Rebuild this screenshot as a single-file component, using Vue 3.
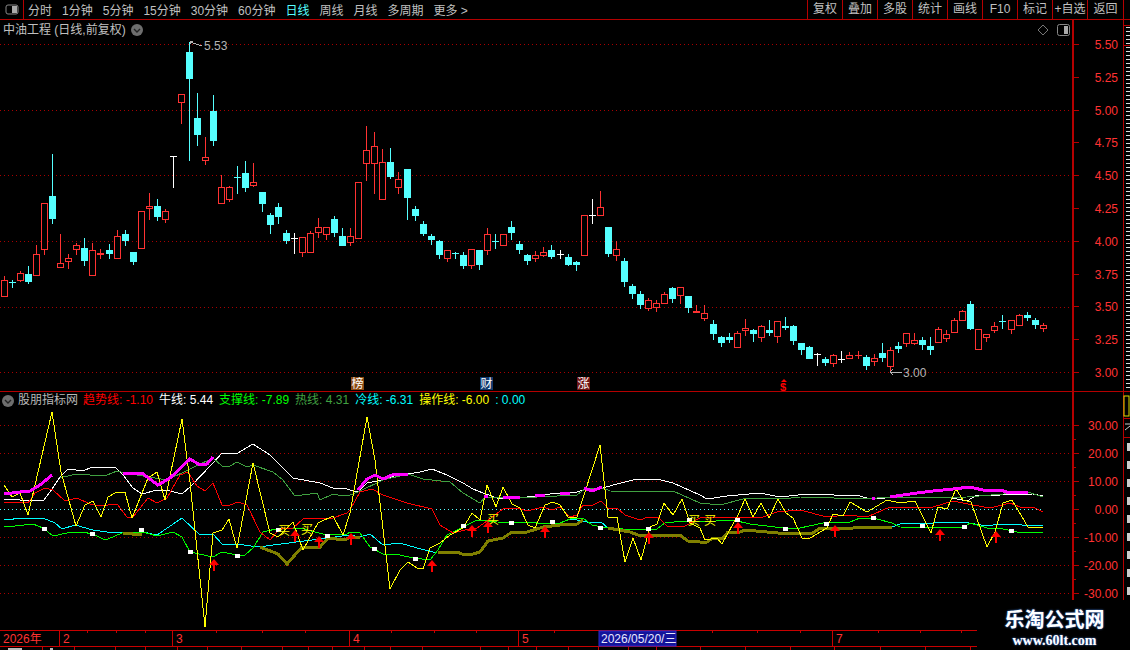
<template>
  <div class="terminal">
    <header class="toolbar">
      <button class="layout-btn">
        <svg width="14" height="11" viewBox="0 0 14 11">
          <rect x="1" y="1" width="12" height="9" rx="2" fill="none" stroke="#888" />
          <rect x="7" y="2" width="5" height="7" fill="#aaa" />
        </svg>
      </button>
      <nav class="periods">
        <span v-for="p in periods" :key="p" :class="{ active: p === '日线' }">{{ p }}</span>
      </nav>
      <div class="actions">
        <span v-for="a in actions" :key="a">{{ a }}</span>
      </div>
    </header>

    <section class="pane kline">
      <div class="plot">
        <div class="title">
          <span>中油工程 (日线,前复权)</span>
          <svg class="round-btn" width="12" height="12" viewBox="0 0 12 12">
            <circle cx="6" cy="6" r="6" fill="#6e6e6e" />
            <path d="M3 5l3 3 3-3" fill="none" stroke="#222" stroke-width="1.4" />
          </svg>
        </div>
        <div class="corner-tools">
          <svg width="12" height="12" viewBox="0 0 12 12">
            <path d="M6 1l5 5-5 5-5-5z" fill="none" stroke="#777" />
          </svg>
          <svg width="13" height="12" viewBox="0 0 13 12">
            <rect x="0.5" y="0.5" width="12" height="11" rx="2" fill="none" stroke="#888" />
            <rect x="7" y="2" width="4" height="8" fill="#aaa" />
          </svg>
        </div>
        <svg class="chart" width="1072" height="371" viewBox="0 20 1072 371">
          <line v-for="y in priceGrid" :key="y" x1="0" x2="1072" :y1="y + 0.5" :y2="y + 0.5" class="grid" />
          <g v-for="c in candles" :key="c.i" shape-rendering="crispEdges">
            <rect :x="c.x" :y="c.high" width="1" :height="c.upper" :fill="c.color" />
            <rect :x="c.x" :y="c.bottom" width="1" :height="c.lower" :fill="c.color" />
            <rect v-if="c.hollow" :x="c.x - 2.5" :y="c.top + 0.5" width="6" :height="c.body - 1" fill="#000" :stroke="c.color" />
            <rect v-else :x="c.x - 3" :y="c.top" width="7" :height="Math.max(c.body, 1)" :fill="c.color" />
          </g>
          <rect x="203" y="38" width="25" height="13" fill="#000" />
          <path d="M190 41v3M190 41h3M190 42l12 4" class="note-arrow" />
          <text x="204" y="50" class="note">5.53</text>
          <path d="M890 372h12M890 372l3-3M890 372l3 3" class="note-arrow" />
          <text x="903" y="377" class="note">3.00</text>
          <g v-for="m in markers" :key="m.text">
            <rect :x="m.x" y="377" width="13" height="13" :fill="m.bg" />
            <text :x="m.x + 0.5" y="388" class="marker">{{ m.text }}</text>
          </g>
          <path d="M784 379l3 3h-6z" fill="#f00" />
          <text x="780" y="391" class="dollar">$</text>
        </svg>
      </div>
      <svg class="axis" width="51" height="371" viewBox="0 20 51 371">
        <rect x="0" y="20" width="2" height="371" fill="#b40000" />
        <g v-for="t in priceTicks" :key="t.y">
          <rect x="2" :y="t.y" :width="t.label ? 5 : 2" height="1" fill="#b40000" />
          <text v-if="t.label" x="46" :y="t.y + 5" class="axis-text">{{ t.label }}</text>
        </g>
      </svg>
      <svg class="strip" width="7" height="371" viewBox="1123 20 7 371">
        <rect x="1123" y="20" width="1" height="371" fill="#b40000" />
        <rect x="1123" y="25" width="7" height="1" fill="#b40000" />
        <rect x="1123" y="45" width="7" height="1" fill="#b40000" />
        <rect v-for="t in stripTicks" :key="t.y" :x="t.x" :y="t.y" :width="1130 - t.x" height="1" fill="#ddd" />
      </svg>
    </section>

    <section class="pane indicator">
      <div class="plot">
        <div class="legend">
          <svg class="round-btn" width="12" height="12" viewBox="0 0 12 12">
            <circle cx="6" cy="6" r="6" fill="#6e6e6e" />
            <path d="M3 5l3 3 3-3" fill="none" stroke="#222" stroke-width="1.4" />
          </svg>
          <span class="legend-name">股朋指标网</span>
          <span v-for="l in legend" :key="l.name" :style="{ color: l.color }">{{ l.name }}: {{ l.value }}</span>
          <span class="legend-extra">: 0.00</span>
        </div>
        <svg class="chart" width="1072" height="238" viewBox="0 392 1072 238">
          <line v-for="y in indicatorGrid" :key="y" x1="0" x2="1072" :y1="y + 0.5" :y2="y + 0.5" class="grid" />
          <line x1="0" x2="1043" y1="509.5" y2="509.5" class="grid zero" />
          <g shape-rendering="crispEdges">
            <polyline v-for="(s, n) in series" :key="n" :points="s.points" :class="['line', s.cls]" />
          </g>
          <rect v-for="(d, n) in dots" :key="n" :x="d[0] - 2" :y="d[1] - 2" width="5" height="4" fill="#fff" />
          <text v-for="b in buys" :key="b[0]" :x="b[0] - 6" :y="b[1] + 5" class="buy">买</text>
          <g v-for="a in arrows" :key="a[0]" fill="#f00">
            <path :d="`M${a[0]} ${a[1]}l5 6h-10z`" />
            <rect :x="a[0] - 1" :y="a[1] + 5" width="2" height="7" />
          </g>
        </svg>
      </div>
      <svg class="axis" width="51" height="238" viewBox="0 392 51 238">
        <rect x="0" y="392" width="2" height="238" fill="#b40000" />
        <g v-for="t in indicatorTicks" :key="t.y">
          <rect x="2" :y="t.y" :width="t.label ? 5 : 2" height="1" fill="#b40000" />
          <text v-if="t.label" x="46" :y="t.y + 5" class="axis-text">{{ t.label }}</text>
        </g>
      </svg>
      <svg class="strip" width="7" height="238" viewBox="1123 392 7 238">
        <rect x="1123" y="392" width="1" height="238" fill="#b40000" />
        <rect x="1124" y="396" width="5" height="20" fill="none" stroke="#dd0" />
        <rect x="1123" y="418" width="7" height="1" fill="#b40000" />
        <path d="M1125 424h5M1125 430l5-4" stroke="#ccc" fill="none" />
        <rect x="1123" y="437" width="7" height="1" fill="#b40000" />
        <rect v-for="y in stripBlocks" :key="y" x="1127" :y="y" width="3" height="8" fill="#ccc" />
      </svg>
    </section>

    <svg class="timeline" width="1130" height="20" viewBox="0 630 1130 20">
      <rect x="0" y="630" width="978" height="1" fill="#c80000" />
      <rect x="0" y="646" width="978" height="1" fill="#c80000" />
      <g v-for="s in months" :key="s.x">
        <rect :x="s.x" y="630" width="1" height="16" fill="#c80000" />
        <text :x="s.x + 4" y="643" class="axis-text start">{{ s.label }}</text>
      </g>
      <rect v-for="x in minorTicks" :key="x" :x="x" y="631" width="1" height="2" fill="#c80000" />
      <rect x="599" y="631" width="77" height="15" fill="#14149a" stroke="#2b2bd0" />
      <text x="601" y="643" class="date-tag">2026/05/20/三</text>
      <rect v-for="x in tabEdges" :key="x" :x="x" y="647" width="1" height="3" fill="#c80000" />
      <rect x="8" y="648" width="14" height="2" fill="#bbb" />
      <rect x="50" y="648" width="3" height="2" fill="#bbb" />
    </svg>

    <aside class="watermark">
      <strong>乐淘公式网</strong>
      <em>www.60lt.com</em>
    </aside>
  </div>
</template>

<script setup>
const periods = ['分时', '1分钟', '5分钟', '15分钟', '30分钟', '60分钟', '日线', '周线', '月线', '多周期', '更多 >']
const actions = ['复权', '叠加', '多股', '统计', '画线', 'F10', '标记', '+自选', '返回']

const COLORS = { r: '#ff3232', c: '#55ffff', w: '#ffffff' }

// type, high, body top, body bottom, low (pixels)
const bars = [
  ['r',276,280,297,297],['c',280,282,282,288],['r',271,273,281,282],['c',266,274,282,284],['r',245,254,276,276],
  ['r',203,203,250,255],['c',154,196,219,224],['r',234,263,268,268],['r',254,258,262,269],['r',243,245,250,255],
  ['c',238,248,261,266],['r',243,250,276,276],['r',249,253,255,259],['c',244,250,254,259],['r',230,236,259,259],
  ['c',230,234,241,246],['c',252,252,262,265],['r',211,211,249,249],['r',193,206,209,220],['c',199,206,217,221],
  ['r',209,211,220,223],['w',156,156,156,188],['r',94,94,103,124],['c',42,52,79,161],['c',93,118,135,146],
  ['r',137,157,161,165],['c',95,111,141,146],['r',175,187,204,204],['r',186,187,200,202],['c',166,177,177,194],
  ['c',161,173,188,192],['r',163,182,186,187],['c',192,192,204,212],['c',213,215,225,234],['c',203,207,217,224],
  ['c',230,233,241,244],['w',233,238,238,254],['r',237,237,253,257],['r',231,233,253,253],['r',218,227,233,238],
  ['r',227,227,235,240],['c',216,219,233,237],['c',228,236,246,246],['r',228,236,243,246],['r',182,182,239,239],
  ['r',126,150,164,181],['r',132,146,164,194],['r',149,162,200,200],['c',148,162,177,179],['r',172,179,188,194],
  ['c',169,169,198,220],['c',206,209,216,221],['c',221,224,234,236],['c',234,236,240,245],['c',240,241,255,259],
  ['r',250,250,259,262],['c',252,253,253,259],['c',252,255,266,269],['r',249,249,266,269],['c',250,250,265,270],
  ['r',228,234,251,255],['c',234,241,241,249],['r',234,234,246,246],['c',221,227,233,240],['c',241,244,250,254],
  ['c',254,255,261,265],['r',251,255,259,262],['r',247,252,256,257],['c',245,250,257,259],['w',250,254,254,259],
  ['c',254,257,265,266],['c',261,262,265,271],['r',215,215,256,256],['w',199,215,215,224],['r',191,207,216,216],
  ['c',227,227,254,257],['r',241,249,256,261],['c',258,261,282,287],['c',284,286,294,299],['c',291,294,305,309],
  ['r',298,300,309,311],['r',300,303,308,312],['r',292,294,304,304],['c',287,288,299,303],['r',287,287,296,304],
  ['c',296,296,308,313],['r',305,311,313,313],['r',305,313,319,321],['c',320,324,334,340],['c',336,337,343,347],
  ['c',333,337,340,343],['r',331,333,348,348],['r',319,328,331,336],['c',329,330,334,342],['r',325,326,338,342],
  ['c',320,330,333,336],['r',321,321,337,343],['c',317,326,328,330],['c',325,326,341,345],['c',343,343,350,355],
  ['c',346,347,359,359],['w',353,354,354,366],['c',357,359,363,366],['r',354,355,364,367],['w',351,359,359,363],
  ['r',352,355,359,359],['r',351,355,356,359],['c',355,357,366,370],['r',354,358,362,366],['c',343,353,358,362],
  ['r',347,350,367,372],['c',342,346,349,353],['r',333,333,344,347],['r',333,340,344,345],['c',337,340,345,350],
  ['c',337,346,350,355],['r',327,329,343,343],['r',330,334,339,342],['r',318,320,333,333],['r',310,311,321,321],
  ['c',301,304,329,330],['r',329,329,350,350],['r',334,334,338,342],['r',322,326,331,333],['c',315,321,321,329],
  ['r',320,320,330,334],['r',314,315,326,326],['c',312,315,318,321],['c',318,320,325,329],['r',323,325,329,332],
]

const candles = bars.map(([type, high, top, bottom, low], i) => ({
  i,
  x: Math.floor(4.3 + 8.054 * i),
  color: COLORS[type],
  hollow: type === 'r' && bottom - top > 1,
  high,
  top,
  bottom,
  upper: top - high,
  lower: low - bottom,
  body: bottom - top,
}))

const priceGrid = [44, 110, 175, 241, 307, 372]
const priceLabels = ['5.50', '5.25', '5.00', '4.75', '4.50', '4.25', '4.00', '3.75', '3.50', '3.25', '3.00']
const priceTicks = priceLabels.flatMap((label, i) => {
  const y = Math.round(44 + 32.8 * i)
  const rows = [{ y, label }]
  if (i % 2 === 1) rows[0] = { y: Math.round(44 + 32.8 * i), label }
  return rows
})

const markers = [
  { text: '榜', x: 351, bg: '#8a4a12' },
  { text: '财', x: 480, bg: '#123a6e' },
  { text: '涨', x: 577, bg: '#6e1414' },
]

const legend = [
  { name: '趋势线', value: '-1.10', color: '#ff0000' },
  { name: '牛线', value: '5.44', color: '#ffffff' },
  { name: '支撑线', value: '-7.89', color: '#00ff00' },
  { name: '热线', value: '4.31', color: '#40a040' },
  { name: '冷线', value: '-6.31', color: '#00ffff' },
  { name: '操作线', value: '-6.00', color: '#ffff00' },
]

// traced from three crops, each 360px wide, at 3x
const trace = (left, flat) => {
  const out = []
  for (let i = 0; i < flat.length; i += 2) {
    out.push(`${Math.round(left + flat[i] / 3)},${Math.round(400 + flat[i + 1] / 3)}`)
  }
  return out.join(' ')
}
const join = (...parts) => parts.join(' ')

const series = [
  { cls: 'white', points: join(
    trace(0, [12,298,60,300,100,300,130,303,150,275,180,232,205,208,250,212,275,202,345,200,370,225,400,265,425,282,470,270,510,272,545,283,570,262,640,190,665,160,715,159,760,133,810,165,880,233,960,248,1000,265,1040,268]),
    trace(350, [0,270,25,275,50,250,100,240,140,225,175,222,210,217,245,208,290,225,340,248,370,268,400,280,440,295,480,295,530,290,600,282,680,275,720,265,760,265,790,255,850,240,920,238,970,250]),
    trace(700, [0,285,20,297,80,287,180,278,240,290,320,282,480,288,510,296,600,290,740,290,800,303,830,285,900,285,1000,282,1030,287]),
  ) },
  { cls: 'green', points: join(
    trace(0, [180,232,190,232,230,222,270,224,320,225,350,212,375,218,500,240,640,175,665,198,690,198,712,185,740,200,760,195,820,215,850,240,885,288,950,280,960,300,1000,282,1030,288]),
    trace(350, [0,285,25,275,100,240,175,222,220,238,300,245,340,280,390,308,405,290,500,295,680,285,705,268,760,265,780,272,900,275,970,272]),
    trace(700, [0,310,60,315,130,297,180,295,250,298,300,292,500,296,530,295,800,290,985,275,1030,290]),
  ) },
  { cls: 'cyan', points: join(
    trace(0, [12,358,30,360,50,355,130,355,165,368,185,388,225,375,280,390,320,397,370,395,430,397,470,405,545,355,600,405,640,403,665,433,712,433,775,440]),
    trace(350, [0,405,30,410,60,402,100,435,150,430,200,445,260,458]),
  ) },
  { cls: 'cyan', points: trace(350, [630,368,660,358,700,362,725,370,752,365,775,385]) },
  { cls: 'cyan', points: trace(700, [575,380,610,368,700,368,790,365,860,377,900,373,1030,378]) },
  { cls: 'lime', points: join(
    trace(0, [12,377,45,377,100,373,130,385,160,408,200,400,245,397,280,403,310,418,325,418,365,398,430,395,470,408,520,395,545,410,570,455,640,470,665,455,710,466,735,466,760,445,790,397,840,385,900,385,970,403,1040,403]),
    trace(350, [0,395,30,400,60,440,100,462,150,465,190,475,240,480,265,450,290,405,340,380,380,360,440,365,560,370,630,368,660,358,700,355,725,375,775,385,860,390,920,388,945,368,1000,362]),
    trace(700, [0,365,100,360,150,372,250,385,300,385,370,370,450,365,480,355,530,357,575,370,600,380,790,385,810,370,860,385,910,388,950,397,985,397,1030,395]),
  ) },
  { cls: 'red', points: join(
    trace(0, [12,305,85,310,105,280,135,263,160,270,195,302,230,295,270,312,300,318,350,312,380,350,400,352,445,295,470,310,500,295,540,225,565,215,590,258,615,272,640,250,665,315,690,315,715,305,740,315,780,395,810,420,840,385,880,385,910,358,1000,355,1040,340]),
    trace(350, [0,330,30,275,65,267,100,285,170,310,245,327,270,375,310,398,345,390,380,385,410,362,460,328,500,325,530,333,580,320,605,330,630,320,660,350,680,345,700,315,730,315,752,302,775,325,800,325,825,345,870,360,895,352,925,352,950,378,1000,380]),
    trace(700, [0,355,40,352,130,350,190,352,230,335,300,330,380,352,440,345,500,352,570,322,610,325,650,320,700,322,760,302,820,315,870,325,930,310,960,320,1000,320,1030,337]),
  ) },
  { cls: 'olive', points: trace(0, [370,400,425,405]) },
  { cls: 'olive', points: join(
    trace(0, [780,442,835,462,860,492,905,440,960,440,985,415,1035,420,1050,412]),
    trace(350, [0,412,30,412]),
  ) },
  { cls: 'olive', points: trace(350, [265,455,320,456,335,461,370,461,390,455,415,423,460,415,485,395,530,395,580,380,630,375,680,373,700,360]) },
  { cls: 'olive', points: join(
    trace(350, [775,385,840,395,865,405,970,407,990,405,1015,422]),
    trace(700, [0,425,20,425,40,415,70,415,85,397,120,397,135,390,200,395,235,398,340,398,360,385,460,385,480,382,575,380]),
  ) },
  { cls: 'yellow', points: join(
    trace(0, [12,255,35,290,60,278,85,345,157,35,182,215,228,378,255,315,278,302,302,352,325,290,350,275,375,275,395,355,445,235,472,215,495,300,545,57,570,245,616,680,640,400,665,390,688,358,710,445,760,190,810,400,835,410,880,365,908,450,955,370,1000,347,1028,405,1050,340]),
    trace(350, [0,340,50,52,75,180,120,568,150,510,175,487,200,503,220,508,240,445,270,430,300,405,340,385,365,340,390,360,412,255,437,322,460,260,485,312,510,325,535,375,555,385,585,315,610,305,630,315,655,350,680,350,750,135,775,350,800,350,825,485,850,415,873,480,900,380,920,372,943,310,970,345,995,298,1020,370]),
    trace(700, [0,385,15,420,50,415,65,432,85,400,115,345,135,297,160,350,183,308,208,355,233,297,258,340,280,355,305,415,330,415,380,385,400,343,430,348,450,307,500,335,560,300,600,310,645,302,693,398,715,322,740,328,767,268,790,300,812,305,862,440,885,395,910,308,935,300,985,382,1030,380]),
  ) },
  { cls: 'magenta', points: trace(0, [12,283,60,275,90,273,120,255,157,224]) },
  { cls: 'magenta', points: trace(0, [370,218,425,220,475,255,510,235,570,178,600,195,620,192,640,170]) },
  { cls: 'magenta', points: trace(350, [25,270,50,238,75,225,100,238,125,225,175,222]) },
  { cls: 'magenta', points: trace(350, [403,288,413,288]) },
  { cls: 'magenta', points: trace(350, [460,295,510,290]) },
  { cls: 'magenta', points: trace(350, [555,285,585,285]) },
  { cls: 'magenta', points: trace(350, [630,280,660,280]) },
  { cls: 'magenta', points: trace(350, [703,265,725,272,755,260]) },
  { cls: 'magenta', points: trace(700, [515,295,525,295]) },
  { cls: 'magenta', points: trace(700, [570,291,610,285,650,280,700,272,760,268,810,262,860,273,900,270,930,278,985,276]) },
]

const dots = [
  [44,529],[92,534],[141,530],[190,552],[237,556],[278,530],[327,536],
  [374,549],[415,559],[463,526],[511,523],[552,522],[600,528],[648,529],[689,520],
  [737,520],[785,529],[826,524],[873,518],[922,526],[964,527],[1011,531],
]

const arrows = [
  [214,559],[295,530],[319,536],[351,533],[432,560],[472,525],[488,521],[545,526],
  [649,532],[738,522],[835,525],[940,529],[996,531],
]

const buys = [[284,530],[307,529],[493,519],[694,520],[710,520]]

const indicatorGrid = [425, 453, 481, 537, 565, 593]
const indicatorLabels = ['30.00', '20.00', '10.00', '0.00', '-10.00', '-20.00', '-30.00']
const indicatorTicks = indicatorLabels.flatMap((label, i) => [
  { y: 425 + 28 * i, label },
  { y: 439 + 28 * i, label: '' },
])

const stripTicks = []
for (let y = 27; y < 391; y += 3 + (y % 2)) {
  if (y === 45) continue
  stripTicks.push({ y, x: 1125 + ((y * 7) % 4) })
}
const stripBlocks = []
for (let y = 443; y < 600; y += 18) stripBlocks.push(y)

const months = [
  { x: 59, label: '2' },
  { x: 172, label: '3' },
  { x: 349, label: '4' },
  { x: 518, label: '5' },
  { x: 832, label: '7' },
  { x: -1, label: '2026年' },
]
const minorTicks = [87, 116, 145, 216, 262, 305, 391, 434, 476, 554, 712, 757, 800, 878, 920, 961]
const tabEdges = [42, 74, 115, 145, 177, 207, 241, 282, 308, 332, 364, 390, 422, 480, 508, 536, 568, 598, 628, 656, 700, 745, 790, 834, 880, 925, 970]
</script>

<style scoped>
.terminal {
  position: relative;
  display: flex;
  flex-direction: column;
  width: 1130px;
  height: 650px;
  overflow: hidden;
  background: #000;
  color: #c0c0c0;
  font-family: "Liberation Sans", "Noto Sans CJK SC", sans-serif;
  font-size: 12px;
}
.toolbar {
  display: flex;
  align-items: center;
  box-sizing: border-box;
  height: 20px;
  padding-right: 6px;
  border-bottom: 1px solid #b40000;
}
.layout-btn {
  display: flex;
  align-items: center;
  justify-content: center;
  box-sizing: border-box;
  width: 24px;
  height: 19px;
  padding: 0;
  border: 0;
  border-right: 1px solid #b40000;
  background: none;
}
.periods {
  display: flex;
  gap: 10px;
  padding-left: 4px;
}
.periods .active {
  color: #55ffff;
}
.actions {
  display: flex;
  margin-left: auto;
  border-right: 1px solid #b40000;
}
.actions span {
  box-sizing: border-box;
  width: 35px;
  height: 19px;
  line-height: 19px;
  text-align: center;
  border-left: 1px solid #b40000;
}
.actions span:last-child {
  width: 36px;
}
.pane {
  display: flex;
}
.kline {
  height: 372px;
  border-bottom: 1px solid #b40000;
  box-sizing: border-box;
}
.indicator {
  height: 238px;
}
.plot {
  position: relative;
  width: 1072px;
}
.chart,
.axis,
.strip,
.timeline {
  display: block;
  flex: none;
}
.title {
  position: absolute;
  top: 2px;
  left: 3px;
  display: flex;
  align-items: center;
  gap: 5px;
  line-height: 16px;
}
.corner-tools {
  position: absolute;
  top: 4px;
  right: 2px;
  display: flex;
  gap: 8px;
}
.legend {
  position: absolute;
  top: 0;
  left: 2px;
  display: flex;
  align-items: center;
  gap: 6px;
  line-height: 17px;
  white-space: nowrap;
}
.legend .legend-name {
  margin-left: -2px;
  margin-right: -1px;
  color: #b8b8b8;
}
.legend .legend-extra {
  color: #00ffff;
}
.grid {
  stroke: #a80000;
  stroke-dasharray: 1 3;
}
.grid.zero {
  stroke: #55ffff;
}
.line {
  fill: none;
  stroke-width: 1;
}
.white { stroke: #ffffff; }
.green { stroke: #40a040; }
.cyan { stroke: #00ffff; }
.lime { stroke: #00ff00; }
.red { stroke: #ff0000; }
.yellow { stroke: #ffff00; }
.olive { stroke: #808000; stroke-width: 3; }
.magenta { stroke: #ff00ff; stroke-width: 3; }
.note {
  fill: #b4b4b4;
  font-size: 12px;
}
.note-arrow {
  fill: none;
  stroke: #b4b4b4;
  shape-rendering: crispEdges;
}
.marker {
  fill: #fff;
  font-size: 12px;
}
.dollar {
  fill: #f00;
  font-size: 11px;
  font-weight: bold;
}
.buy {
  fill: #ffff00;
  font-size: 12px;
}
.axis-text {
  fill: #ff3232;
  font-size: 12px;
  text-anchor: end;
}
.axis-text.start {
  text-anchor: start;
}
.date-tag {
  fill: #e8e8ff;
  font-size: 12px;
}
.watermark {
  position: absolute;
  right: 0;
  bottom: 0;
  display: flex;
  flex-direction: column;
  align-items: center;
  box-sizing: border-box;
  width: 153px;
  height: 50px;
  padding: 8px 0 0 2px;
  background: #000;
  color: #fff;
  font-family: "Liberation Serif", "Noto Sans CJK SC", serif;
  text-shadow: 0 0 2px #4a90ff;
}
.watermark strong {
  font-size: 20px;
  line-height: 24px;
}
.watermark em {
  font-style: normal;
  font-weight: bold;
  font-size: 14px;
  line-height: 17px;
}
</style>

<style>
body {
  background: #000;
  overflow: hidden;
}
</style>
